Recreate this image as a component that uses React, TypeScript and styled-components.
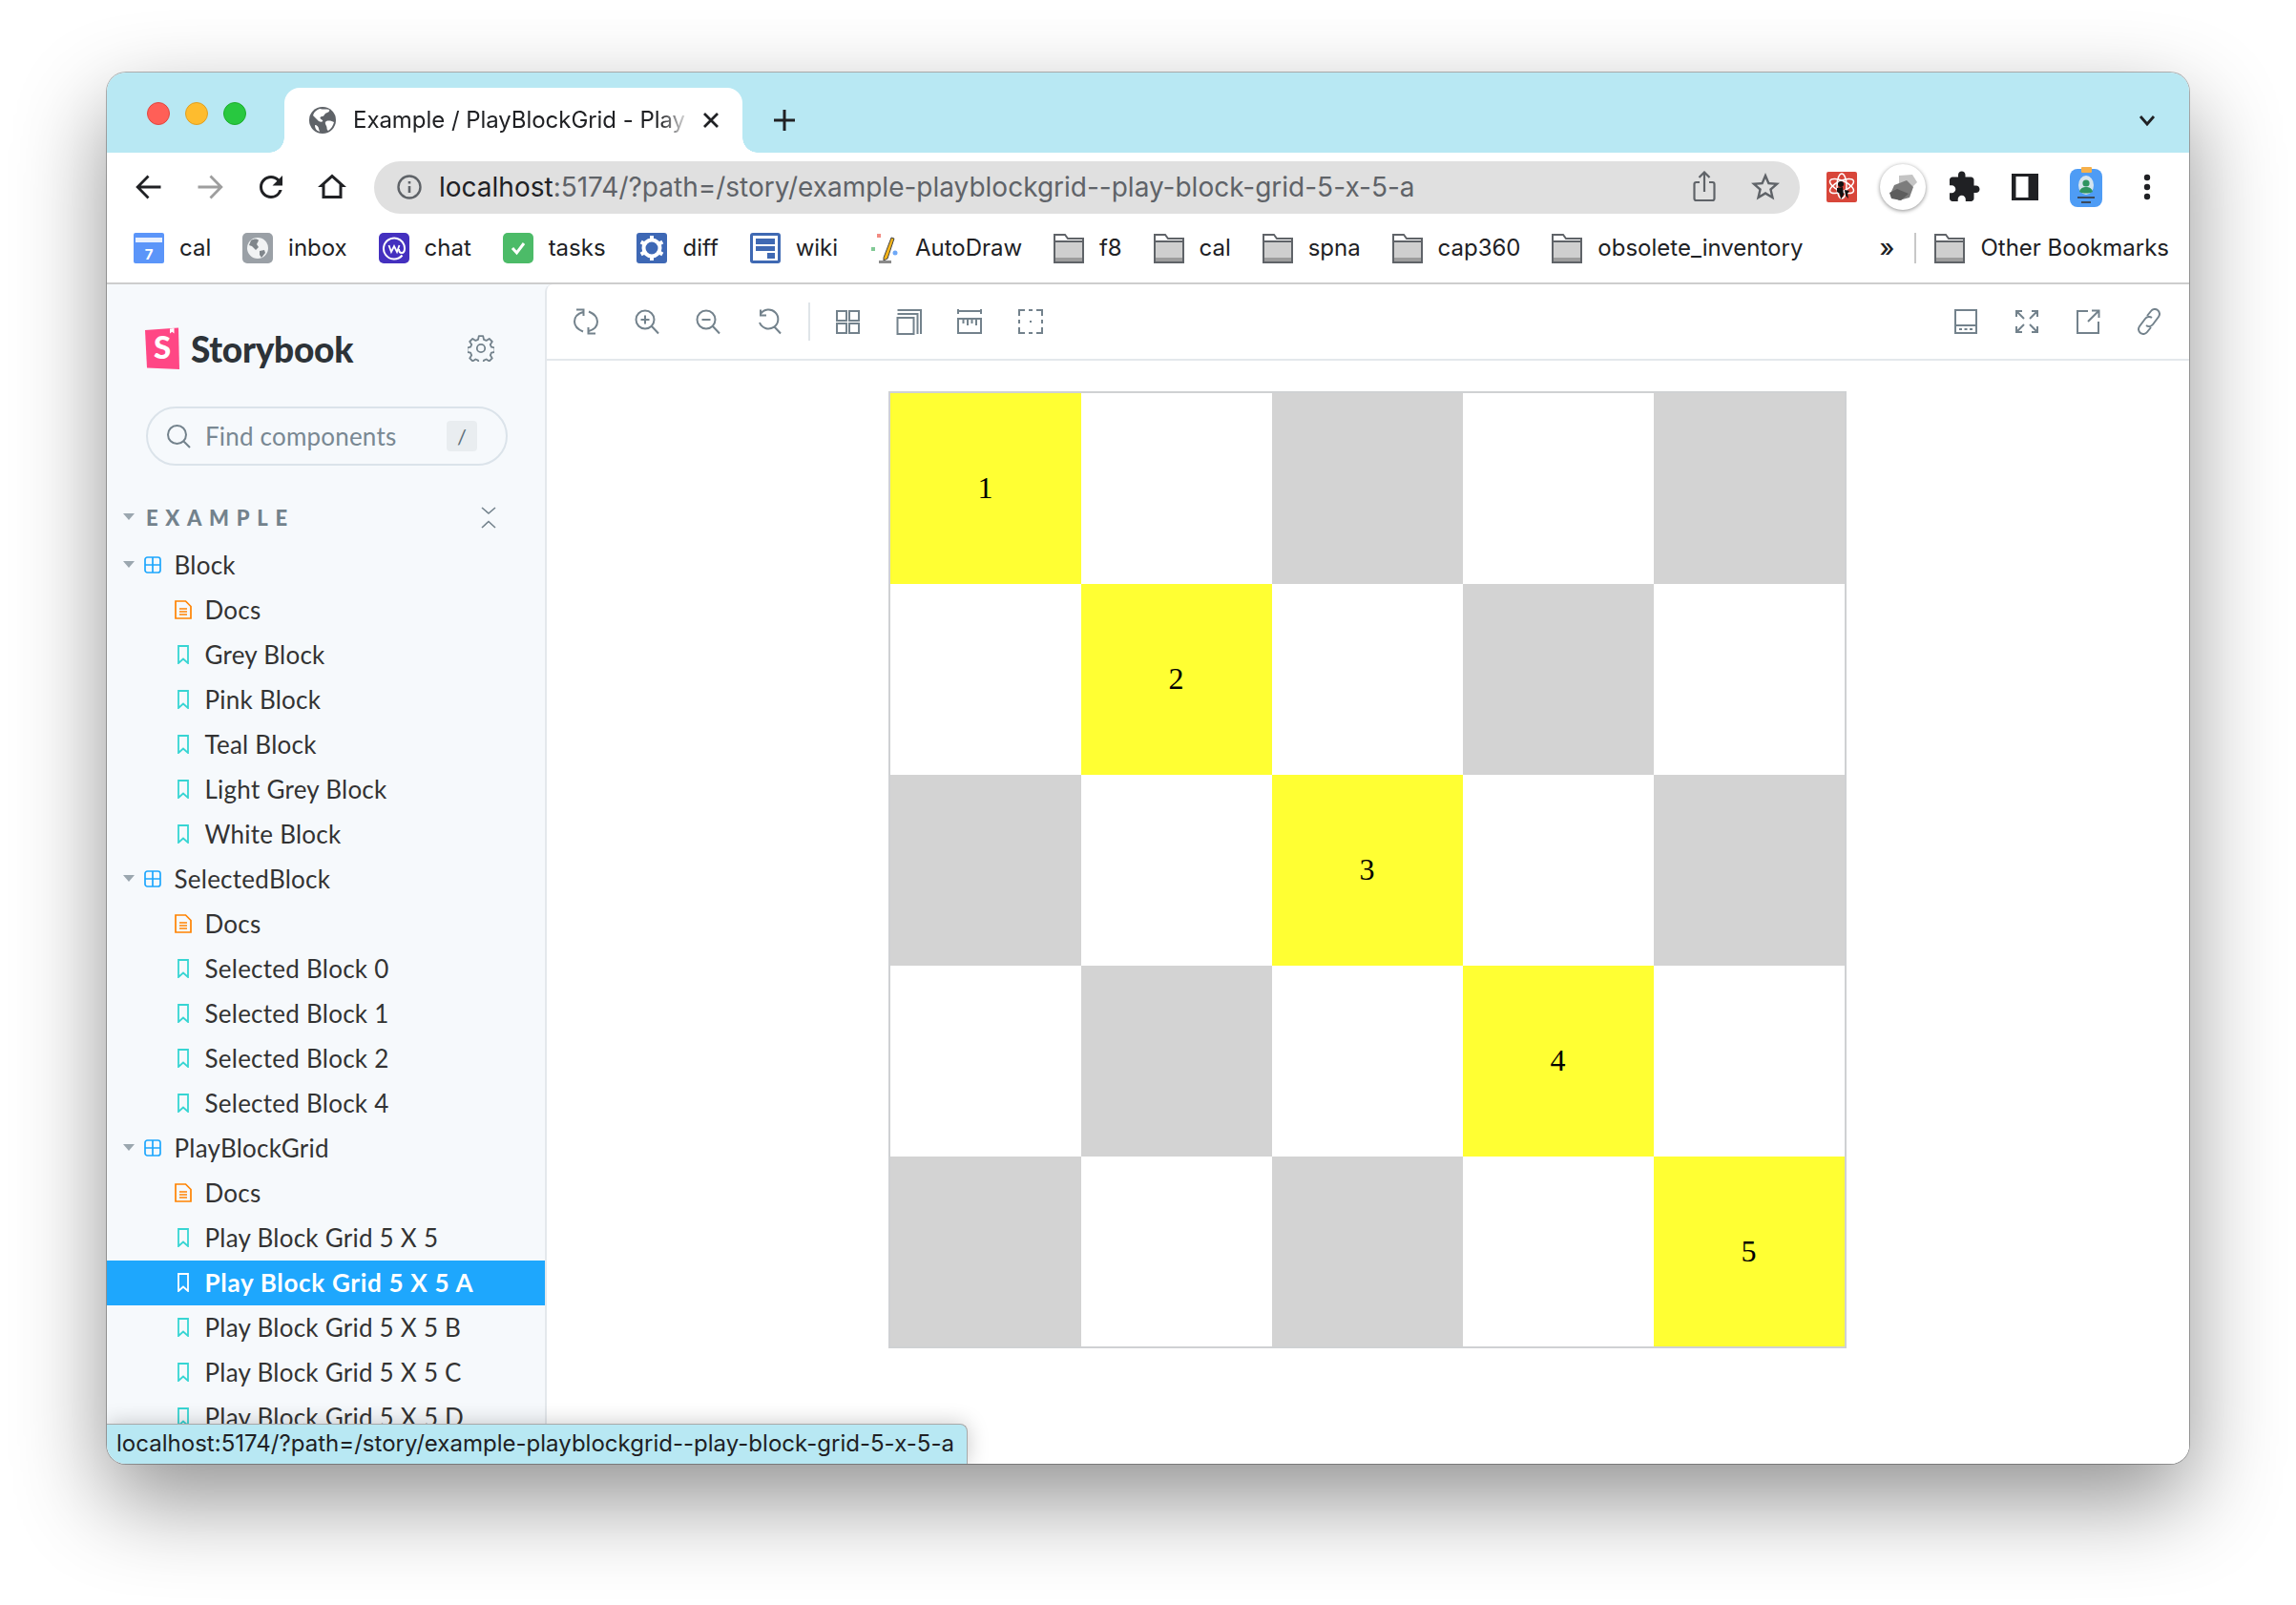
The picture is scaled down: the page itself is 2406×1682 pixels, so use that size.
import React from "react"
import styled, { createGlobalStyle } from "styled-components"

const CHROME_FONT = `Inter, "Noto Sans", sans-serif`
const SB_FONT = `Lato, "Noto Sans", sans-serif`

const GlobalStyle = createGlobalStyle`
  html, body {
    margin: 0;
    padding: 0;
    background: #fff;
  }
  * {
    box-sizing: border-box;
  }
`

const Page = styled.div`
  width: 2406px;
  height: 1682px;
  padding: 76px 0 0 112px;
  overflow: hidden;
`

const Window = styled.div`
  position: relative;
  display: flex;
  flex-direction: column;
  width: 2182px;
  height: 1458px;
  border-radius: 20px;
  overflow: hidden;
  background: #fff;
  box-shadow: 0 38px 94px rgba(0, 0, 0, 0.43), 0 0 0 1px rgba(0, 0, 0, 0.28);
  font-family: ${CHROME_FONT};
  color: #202124;
`

// tab strip
const TabStrip = styled.div`
  display: flex;
  align-items: flex-start;
  flex: none;
  height: 84px;
  padding: 16px 12px 0 42px;
  background: #b8e8f3;
`

const TrafficLights = styled.div`
  display: flex;
  gap: 16px;
  margin: 15px 40px 0 0;
`

const Light = styled.span<{ $fill: string; $edge: string }>`
  width: 24px;
  height: 24px;
  border-radius: 50%;
  background: ${({ $fill }) => $fill};
  border: 1px solid ${({ $edge }) => $edge};
`

const Tab = styled.div`
  position: relative;
  display: flex;
  align-items: center;
  width: 480px;
  height: 68px;
  padding: 0 19px 0 26px;
  background: #fff;
  border-radius: 16px 16px 0 0;

  &::before,
  &::after {
    content: "";
    position: absolute;
    bottom: 0;
    width: 16px;
    height: 16px;
  }
  &::before {
    left: -16px;
    background: radial-gradient(circle at 0 0, transparent 15.5px, #fff 16px);
  }
  &::after {
    right: -16px;
    background: radial-gradient(circle at 100% 0, transparent 15.5px, #fff 16px);
  }
`

const TabTitle = styled.span`
  flex: 1;
  margin: 0 12px 0 18px;
  font-size: 24px;
  line-height: 34px;
  letter-spacing: -0.05px;
  white-space: nowrap;
  mask-image: linear-gradient(to right, #000 92%, rgba(0, 0, 0, 0.15) 100%);
`

const NewTab = styled.div`
  display: flex;
  justify-content: center;
  align-items: center;
  width: 36px;
  height: 68px;
  margin-left: 26px;
`

const StripEnd = styled.div`
  display: flex;
  justify-content: center;
  align-items: center;
  width: 64px;
  height: 68px;
  margin-left: auto;
`

// address toolbar
const Toolbar = styled.div`
  display: flex;
  align-items: center;
  flex: none;
  height: 72px;
  padding: 0 12px;
`

const ToolButton = styled.div`
  display: flex;
  justify-content: center;
  align-items: center;
  flex: none;
  width: 64px;
  height: 56px;
`

const AddressBar = styled.div`
  display: flex;
  align-items: center;
  flex: 1;
  height: 55px;
  margin: 0 12px;
  padding: 0 4px 0 21px;
  border-radius: 28px;
  background: #e0e0e0;
`

const InfoSlot = styled.div`
  display: flex;
  flex: none;
  justify-content: center;
  width: 32px;
`

const Url = styled.div`
  flex: 1;
  margin-left: 15px;
  font-size: 28px;
  line-height: 36px;
  color: #5f6368;
  white-space: nowrap;
`

const UrlHost = styled.span`
  color: #202124;
`

// bookmarks
const BookmarkBar = styled.div`
  display: flex;
  align-items: center;
  flex: none;
  height: 66px;
  padding: 0 21px 8px 28px;
  gap: 32.85px;
  border-bottom: 2px solid #cdcdcd;
`

const Bookmark = styled.div`
  display: flex;
  align-items: center;
  gap: 16px;
  font-size: 24px;
  line-height: 32px;
  white-space: nowrap;
`

const MoreBookmarks = styled.div`
  display: flex;
  align-items: center;
  height: 32px;
  margin-left: auto;
  font-size: 26px;
  font-weight: 500;
  line-height: 32px;
`

const BookmarkDivider = styled.div`
  width: 2px;
  height: 32px;
  margin: 0 -13.85px 0 -11.85px;
  background: #c8c8c8;
`

// storybook shell
const Shell = styled.div`
  display: flex;
  flex: 1;
  min-height: 0;
  font-family: ${SB_FONT};
  background: #f6f9fc;
`

const Sidebar = styled.aside`
  flex: none;
  width: 459px;
  padding-top: 45px;
  overflow: hidden;
`

const Brand = styled.div`
  display: flex;
  align-items: center;
  height: 44px;
  padding: 0 40px;
`

const BrandName = styled.span`
  margin-left: 12px;
  font-size: 37px;
  font-weight: 900;
  letter-spacing: -0.25px;
  color: #2d3338;
`

const BrandGear = styled.div`
  display: flex;
  margin-left: auto;
  margin-right: 13px;
`

const Search = styled.div`
  display: flex;
  align-items: center;
  width: 379px;
  height: 62px;
  margin: 39px 0 0 41px;
  padding: 0 30px 0 18px;
  border: 2px solid #dbe3ea;
  border-radius: 31px;
`

const SearchText = styled.span`
  flex: 1;
  margin-left: 14px;
  font-size: 26px;
  letter-spacing: 0.2px;
  color: #798893;
`

const SlashKey = styled.span`
  display: flex;
  justify-content: center;
  align-items: center;
  width: 32px;
  height: 32px;
  border-radius: 4px;
  background: #e9edf0;
  font-size: 22px;
  color: #5f6f7a;
`

const GroupHeader = styled.div`
  display: flex;
  align-items: center;
  height: 30px;
  margin: 39px 0 12px;
  padding: 0 45px 0 17px;
`

const GroupTitle = styled.span`
  flex: 1;
  margin-left: 12px;
  font-size: 22px;
  font-weight: 900;
  letter-spacing: 7.7px;
  color: #73828c;
`

const Row = styled.div<{ $leaf?: boolean; $selected?: boolean }>`
  display: flex;
  align-items: center;
  height: 47px;
  padding: 0 0 1px ${({ $leaf }) => ($leaf ? "71px" : "17px")};
  font-size: 26px;
  font-weight: ${({ $selected }) => ($selected ? 700 : 400)};
  letter-spacing: ${({ $selected }) => ($selected ? "0.7px" : "0.25px")};
  color: ${({ $selected }) => ($selected ? "#fff" : "#333")};
  background: ${({ $selected }) => ($selected ? "#1ea7fd" : "transparent")};
  white-space: nowrap;
`

const RowIcon = styled.span<{ $wide?: boolean }>`
  display: flex;
  justify-content: center;
  flex: none;
  width: 18px;
  margin: ${({ $wide }) => ($wide ? "0 13.5px 0 10px" : "0 13.5px 0 0")};
`

const Preview = styled.main`
  display: flex;
  flex-direction: column;
  flex: 1;
  min-width: 0;
  background: #fff;
  border-left: 2px solid #e4e8ec;
  border-top-left-radius: 8px;
`

const PreviewBar = styled.div`
  display: flex;
  align-items: center;
  flex: none;
  height: 80px;
  padding: 0 10px 0 9px;
  border-bottom: 2px solid #e4e8ec;
`

const PreviewButton = styled.div`
  display: flex;
  justify-content: center;
  align-items: center;
  width: 64px;
  height: 56px;
`

const PreviewDivider = styled.div`
  width: 2px;
  height: 40px;
  margin: 0 7px 0 9px;
  background: #e0e5e9;
`

const PreviewSpacer = styled.div`
  flex: 1;
`

const BoardStage = styled.div`
  display: flex;
  justify-content: center;
  padding: 32px 2px 0 0;
`

const Board = styled.div`
  display: grid;
  grid-template-columns: repeat(5, 200px);
  grid-auto-rows: 199.9px;
  border: 2px solid #cfd1d3;
`

const cellColors = { Y: "#ffff33", W: "#ffffff", G: "#d3d3d3" }

const Cell = styled.div<{ $kind: "Y" | "W" | "G" }>`
  display: flex;
  justify-content: center;
  align-items: center;
  background: ${({ $kind }) => cellColors[$kind]};
  font-family: "Liberation Serif", serif;
  font-size: 32px;
  color: #000;
`

const StatusBubble = styled.div`
  position: absolute;
  left: 0;
  bottom: 0;
  width: 902px;
  height: 42px;
  padding-left: 10px;
  border-top: 1px solid #a9a9a9;
  border-right: 1px solid #a9a9a9;
  border-top-right-radius: 8px;
  background: #b8e8f3;
  box-shadow: 0 0 22px rgba(0, 0, 0, 0.22);
  font-family: ${CHROME_FONT};
  font-size: 24px;
  letter-spacing: 0.02px;
  line-height: 40px;
  color: #202124;
  white-space: nowrap;
`

// chrome icons
const Svg = styled.svg`
  display: block;
  flex: none;
`

const Material = ({ d, size = 36, fill = "#202124" }: { d: string; size?: number; fill?: string }) => (
  <Svg width={size} height={size} viewBox="0 0 24 24">
    <path d={d} fill={fill} />
  </Svg>
)

const Arrow = ({ flip, color }: { flip?: boolean; color: string }) => (
  <Svg width="30" height="30" viewBox="0 0 30 30" style={flip ? { transform: "scaleX(-1)" } : undefined}>
    <path d="M27.5 15H4M14.5 3.5L3.2 15l11.3 11.5" fill="none" stroke={color} strokeWidth="2.8" />
  </Svg>
)

const GlobeTab = () => (
  <Svg width="28" height="28" viewBox="0 0 28 28">
    <circle cx="14" cy="14" r="14" fill="#5f6368" />
    <path d="M11 2c4 1 7 0 10 1 1 2-2 3-4 4-2 2-1 3-4 3-3 1-1 3 1 4 1 2-2 2-4 1L4 9c1-4 4-6 7-7zM18 15c3-1 6 0 8 1-1 4-3 7-6 9-2-1-1-3-2-5s-2-4 0-5zM6 19c2 0 4 2 4 4l1 3c-3-1-5-3-5-7z" fill="#fff" />
  </Svg>
)

const InfoIcon = () => (
  <Svg width="28" height="28" viewBox="0 0 28 28">
    <circle cx="14" cy="14" r="11.5" fill="none" stroke="#5f6368" strokeWidth="2.4" />
    <path d="M14 13v7M14 8v2.6" stroke="#5f6368" strokeWidth="2.6" />
  </Svg>
)

const ShareIcon = () => (
  <Svg width="28" height="34" viewBox="0 0 28 34">
    <path d="M9 12H5.5a2 2 0 0 0-2 2v15a2 2 0 0 0 2 2h17a2 2 0 0 0 2-2V14a2 2 0 0 0-2-2H19M14 22V2M8.5 7L14 1.5 19.5 7" fill="none" stroke="#5f6368" strokeWidth="2.2" />
  </Svg>
)

const RedExtension = () => (
  <Svg width="32" height="32" viewBox="0 0 32 32">
    <rect width="32" height="32" rx="2" fill="#d8463a" />
    <g fill="none" stroke="#fff" strokeWidth="1.5">
      <ellipse cx="16" cy="15" rx="13.5" ry="5.5" transform="rotate(25 16 15)" />
      <ellipse cx="16" cy="15" rx="13.5" ry="5.5" transform="rotate(-25 16 15)" />
      <ellipse cx="16" cy="15" rx="5" ry="13" />
    </g>
    <circle cx="15" cy="13" r="3" fill="#111" />
    <path d="M11 17l6-1 1 8-3 5-1-6-3-2zM19 19l5 1-2 3 1 5-3-3z" fill="#111" />
  </Svg>
)

const StoneExtension = () => (
  <Svg width="48" height="48" viewBox="0 0 48 48" style={{ borderRadius: "50%", boxShadow: "0 1px 4px rgba(0,0,0,.45)", background: "#fff" }}>
    <path d="M20 12l14-1 5 8-8 8-11-5z" fill="#c4c4c4" />
    <path d="M15 22l13-5 7 7-4 11-11 3-9-7z" fill="#7c7c7c" />
    <path d="M10 30l8-4 12 5-8 7-10-2z" fill="#5d5d5d" />
  </Svg>
)

const PanelIcon = () => (
  <Svg width="28" height="28" viewBox="0 0 28 28">
    <rect width="28" height="28" fill="#202124" />
    <rect x="4.5" y="3" width="13" height="22" fill="#fff" />
  </Svg>
)

const BadgeExtension = () => (
  <Svg width="34" height="42" viewBox="0 0 34 42">
    <rect y="2" width="34" height="40" rx="8" fill="#4e9cf5" />
    <rect x="12" width="11" height="6" rx="1" fill="#f6b04a" />
    <ellipse cx="17" cy="19" rx="8" ry="10" fill="#d5e4ee" />
    <circle cx="17" cy="17" r="3.6" fill="#2f9460" />
    <path d="M10 26c1-4 4-5 7-5s6 1 7 5c-4 2-10 2-14 0z" fill="#2f9460" />
    <rect x="8" y="31" width="18" height="2" fill="#3a4a5c" />
    <rect x="12" y="36" width="10" height="2" fill="#3a4a5c" />
  </Svg>
)

const DotsIcon = () => (
  <Svg width="10" height="30" viewBox="0 0 10 30">
    <circle cx="5" cy="5" r="3.2" fill="#202124" />
    <circle cx="5" cy="15" r="3.2" fill="#202124" />
    <circle cx="5" cy="25" r="3.2" fill="#202124" />
  </Svg>
)

// bookmark favicons
const Fav = ({ children }: { children: React.ReactNode }) => (
  <Svg width="32" height="32" viewBox="0 0 32 32">
    {children}
  </Svg>
)

const CalFav = () => (
  <Fav>
    <rect width="32" height="32" rx="2" fill="#5b95f9" />
    <rect x="2" y="5" width="28" height="5" fill="#e8f0fe" />
    <text x="16" y="28" textAnchor="middle" fontFamily="Inter, sans-serif" fontWeight="700" fontSize="15" fill="#fff">7</text>
  </Fav>
)

const InboxFav = () => (
  <Fav>
    <rect width="32" height="32" rx="5" fill="#9aa0a6" />
    <circle cx="16" cy="16" r="11" fill="#f1f3f4" />
    <path d="M9 8c3-2 7-2 8 0l-2 4 2 3-3 3-4-4-3-1zM18 19l5-1 1 3-4 5-2-3z" fill="#80868b" />
  </Fav>
)

const ChatFav = () => (
  <Fav>
    <rect width="32" height="32" rx="5" fill="#4430bf" />
    <path d="M24.5 23.5A11 11 0 1 1 27 16c0 3-1 5-3 5s-3-2-3-4" fill="none" stroke="#fff" strokeWidth="2" />
    <path d="M10.5 13l2.5 7 3-6 3 6 2.5-7" fill="none" stroke="#fff" strokeWidth="1.8" />
  </Fav>
)

const TasksFav = () => (
  <Fav>
    <rect width="32" height="32" rx="5" fill="#4cbb68" />
    <path d="M10 16l4.5 5L22 11" fill="none" stroke="#fff" strokeWidth="3" />
  </Fav>
)

const DiffFav = () => (
  <Fav>
    <rect width="32" height="32" rx="3" fill="#3e68b5" />
    <circle cx="16" cy="16" r="8.5" fill="none" stroke="#fff" strokeWidth="4" />
    <path d="M16 3v5M16 24v5M4.7 9.5l4.3 2.5M23 20l4.3 2.5M4.7 22.5L9 20M23 12l4.3-2.5" stroke="#fff" strokeWidth="4" />
    <circle cx="16" cy="16" r="3" fill="#3e68b5" />
  </Fav>
)

const WikiFav = () => (
  <Fav>
    <rect width="32" height="32" rx="3" fill="#3f69b3" />
    <rect x="3" y="3" width="26" height="26" fill="#fff" />
    <rect x="6" y="6" width="20" height="6" fill="#3f69b3" />
    <rect x="6" y="14" width="20" height="5" fill="#3f69b3" />
    <rect x="18" y="21" width="8" height="6" fill="#3f69b3" />
  </Fav>
)

const DrawFav = () => (
  <Fav>
    <path d="M15 26L23 5l3 1-7 21-4 2z" fill="#f4b41a" stroke="#444" strokeWidth="1" />
    <rect x="10" y="29" width="13" height="3" fill="#8a8a8a" />
    <rect x="8" y="1" width="4" height="4" fill="#f28b82" />
    <rect x="2" y="15" width="4" height="4" fill="#81c995" />
    <circle cx="27" cy="21" r="2.5" fill="#6ea8f7" />
  </Fav>
)

const FolderFav = () => (
  <Fav>
    <path d="M1 2h11l3 4h16v25H1z" fill="#fff" stroke="#5f6368" strokeWidth="2" />
    <rect x="2" y="9" width="28" height="21" fill="#cfcfcf" />
    <rect x="2" y="8" width="28" height="2" fill="#5f6368" />
    <rect x="2" y="26" width="28" height="4" fill="#9d9d9d" />
  </Fav>
)

// storybook icons
const LogoMark = () => (
  <Svg width="36" height="44" viewBox="0 0 36 44">
    <path d="M0 3L35 0.5l1 43.5L2 42.5z" fill="#ff4785" />
    <path d="M26 1.500l4.500-.4V6.500l-2.200-1.800L26 6.500z" fill="#fff" />
    <text x="18" y="33" textAnchor="middle" fontFamily="Lato, sans-serif" fontWeight="900" fontSize="33" fill="#fff">S</text>
  </Svg>
)

const SB_STROKE = "#73828c"

const Line = ({ d, size = 28, color = SB_STROKE, width = 2 }: { d: string; size?: number; color?: string; width?: number }) => (
  <Svg width={size} height={size} viewBox="0 0 28 28">
    <path d={d} fill="none" stroke={color} strokeWidth={width} />
  </Svg>
)

const GearIcon = () => (
  <Svg width="28" height="28" viewBox="0 0 28 28">
    <circle cx="14" cy="14" r="4.2" fill="none" stroke={SB_STROKE} strokeWidth="1.8" />
    <path d="M11.8 1.2h4.4l.8 3.6 2.6 1.1 3.1-2 3.1 3.1-2 3.1 1.1 2.6 3.6.8v4.4l-3.6.8-1.1 2.6 2 3.1-3.1 3.1-3.1-2-2.6 1.1-.8 3.6h-4.4l-.8-3.6-2.6-1.1-3.1 2-3.1-3.1 2-3.1-1.1-2.6-3.6-.8v-4.4l3.6-.8 1.1-2.6-2-3.1 3.100-3.1 3.1 2 2.6-1.1z" fill="none" stroke={SB_STROKE} strokeWidth="1.8" strokeLinejoin="round" />
  </Svg>
)

const Caret = () => (
  <Svg width="12" height="8" viewBox="0 0 12 8">
    <path d="M0 0h12L6 7z" fill="#9ba7af" />
  </Svg>
)

const ComponentIcon = ({ color = "#1ea7fd" }: { color?: string }) => (
  <Svg width="18" height="18" viewBox="0 0 18 18">
    <rect x="1" y="1" width="16" height="16" rx="2.5" fill="none" stroke={color} strokeWidth="1.7" />
    <path d="M9 1v16M1 9h16" stroke={color} strokeWidth="1.7" />
  </Svg>
)

const DocIcon = () => (
  <Svg width="18" height="20" viewBox="0 0 18 20">
    <path d="M1 1h10.5L17 6.5V19H1z" fill="none" stroke="#ff8300" strokeWidth="1.7" />
    <path d="M5 9h8M5 12h8M5 15h8" stroke="#ff8300" strokeWidth="1.4" />
  </Svg>
)

const StoryIcon = ({ color = "#37d5d3" }: { color?: string }) => (
  <Svg width="12" height="20" viewBox="0 0 12 20">
    <path d="M1 1h10v18l-5-4.5L1 19z" fill="none" stroke={color} strokeWidth="1.8" />
  </Svg>
)

const previewLeft = [
  "M11 4C6 5.500 2 9 2 14s3 8 9 10.500M4 1.500h7.500V8M17 24c5-1.500 9-5 9-10s-3-8-9-10.500M24 26.500h-7.500V20",
  "M12 2.500a9.500 9.500 0 1 1 0 19 9.500 9.500 0 0 1 0-19zM19 19l7 7.500M12 7.500v9M7.500 12h9",
  "M12 2.500a9.500 9.500 0 1 1 0 19 9.500 9.500 0 0 1 0-19zM19 19l7 7.500M7.500 12h9",
  "M5 6a10 10 0 1 1-1 9M5 1.500V7.500h6M19 19l7 7.500",
]

const previewRight = [
  "M3 3h10v10H3zM16 3h10v10H16zM3 16h10v10H3zM16 16h10v10H16z",
  "M2.500 10h17v17h-17zM2.500 6H23.500V27M2.500 2H27V27",
  "M2 3h24M2 1v5M26 1v5M2 11h24v15H2zM7.500 11v5M12 11v7M16.500 11v5M21 11v7",
  "M2 8V2h6M20 2h6v6M26 20v6h-6M8 26H2v-6M12 2h4M12 26h4M2 12v4M26 12v4M14 13v2",
]

const previewEnd = [
  "M3 2h22v24H3zM3 18h22M7 22h3M12.500 22h3M18 22h3",
  "M3 3l8 8M3 9V3h6M25 3l-8 8M25 9V3h-6M3 25l8-8M3 19v6h6M25 25l-8-8M25 19v6h-6",
  "M14 3H3v23h22V14M14 14L25 3M18 2.500h7.500V10",
  "M12 8l4-5a5 5 0 0 1 8 6l-6 8a5 5 0 0 1-7 1M16 20l-4 5a5 5 0 0 1-8-6l6-8a5 5 0 0 1 7-1",
]

const BOARD = ["YWGWG", "WYWGW", "GWYWG", "WGWYW", "GWGWY"]

type TreeItem = { label: string; kind: "component" | "doc" | "story"; selected?: boolean }

const TREE: TreeItem[] = [
  { label: "Block", kind: "component" },
  { label: "Docs", kind: "doc" },
  { label: "Grey Block", kind: "story" },
  { label: "Pink Block", kind: "story" },
  { label: "Teal Block", kind: "story" },
  { label: "Light Grey Block", kind: "story" },
  { label: "White Block", kind: "story" },
  { label: "SelectedBlock", kind: "component" },
  { label: "Docs", kind: "doc" },
  { label: "Selected Block 0", kind: "story" },
  { label: "Selected Block 1", kind: "story" },
  { label: "Selected Block 2", kind: "story" },
  { label: "Selected Block 4", kind: "story" },
  { label: "PlayBlockGrid", kind: "component" },
  { label: "Docs", kind: "doc" },
  { label: "Play Block Grid 5 X 5", kind: "story" },
  { label: "Play Block Grid 5 X 5 A", kind: "story", selected: true },
  { label: "Play Block Grid 5 X 5 B", kind: "story" },
  { label: "Play Block Grid 5 X 5 C", kind: "story" },
  { label: "Play Block Grid 5 X 5 D", kind: "story" },
]

const BOOKMARKS: { label: string; icon: React.ReactNode }[] = [
  { label: "cal", icon: <CalFav /> },
  { label: "inbox", icon: <InboxFav /> },
  { label: "chat", icon: <ChatFav /> },
  { label: "tasks", icon: <TasksFav /> },
  { label: "diff", icon: <DiffFav /> },
  { label: "wiki", icon: <WikiFav /> },
  { label: "AutoDraw", icon: <DrawFav /> },
  { label: "f8", icon: <FolderFav /> },
  { label: "cal", icon: <FolderFav /> },
  { label: "spna", icon: <FolderFav /> },
  { label: "cap360", icon: <FolderFav /> },
  { label: "obsolete_inventory", icon: <FolderFav /> },
]

const STATUS_URL = "localhost:5174/?path=/story/example-playblockgrid--play-block-grid-5-x-5-a"

const TreeRow = ({ item }: { item: TreeItem }) => {
  if (item.kind === "component") {
    return (
      <Row>
        <Caret />
        <RowIcon $wide>
          <ComponentIcon />
        </RowIcon>
        {item.label}
      </Row>
    )
  }
  return (
    <Row $leaf $selected={item.selected}>
      <RowIcon>
        {item.kind === "doc" ? <DocIcon /> : <StoryIcon color={item.selected ? "#fff" : undefined} />}
      </RowIcon>
      {item.label}
    </Row>
  )
}

export default function App() {
  return (
    <Page>
      <GlobalStyle />
      <Window>
        <TabStrip>
          <TrafficLights>
            <Light $fill="#ff5f57" $edge="#e2463f" />
            <Light $fill="#febc2e" $edge="#dfa023" />
            <Light $fill="#28c840" $edge="#1dad2c" />
          </TrafficLights>
          <Tab>
            <GlobeTab />
            <TabTitle>Example / PlayBlockGrid - Play</TabTitle>
            <Line d="M7 7l14 14M21 7L7 21" color="#202124" width={2.8} />
          </Tab>
          <NewTab>
            <Line d="M14 3v22M3 14h22" color="#202124" width={3} />
          </NewTab>
          <StripEnd>
            <Line d="M7 10l7 8 7-8" color="#202124" width={2.8} />
          </StripEnd>
        </TabStrip>

        <Toolbar>
          <ToolButton><Arrow color="#202124" /></ToolButton>
          <ToolButton><Arrow flip color="#9e9e9e" /></ToolButton>
          <ToolButton>
            <Material d="M17.65 6.35A7.958 7.958 0 0 0 12 4c-4.42 0-7.99 3.58-7.99 8s3.57 8 7.99 8c3.73 0 6.84-2.55 7.73-6h-2.08A5.99 5.99 0 0 1 12 18c-3.31 0-6-2.69-6-6s2.69-6 6-6c1.66 0 3.14.69 4.22 1.78L13 11h7V4l-2.35 2.35z" />
          </ToolButton>
          <ToolButton>
            <Material d="M12 5.69l5 4.5V18H7v-7.810l5-4.500M12 3L2 12h3v8h14v-8h3L12 3z" />
          </ToolButton>
          <AddressBar>
            <InfoSlot><InfoIcon /></InfoSlot>
            <Url><UrlHost>localhost</UrlHost>:5174/?path=/story/example-playblockgrid--play-block-grid-5-x-5-a</Url>
            <ToolButton><ShareIcon /></ToolButton>
            <ToolButton>
              <Material fill="#5f6368" d="M22 9.240l-7.190-.620L12 2 9.190 8.630 2 9.240l5.460 4.730L5.820 21 12 17.270 18.180 21l-1.630-7.030L22 9.240zM12 15.400l-3.760 2.270 1-4.280-3.320-2.880 4.380-.380L12 6.100l1.710 4.040 4.380.380-3.320 2.880 1 4.280L12 15.400z" />
            </ToolButton>
          </AddressBar>
          <ToolButton><RedExtension /></ToolButton>
          <ToolButton><StoneExtension /></ToolButton>
          <ToolButton>
            <Material d="M20.500 11H19V7c0-1.100-.9-2-2-2h-4V3.500C13 2.120 11.880 1 10.500 1S8 2.120 8 3.500V5H4c-1.100 0-1.990.9-1.990 2v3.800H3.500c1.490 0 2.700 1.210 2.700 2.700s-1.210 2.700-2.700 2.700H2V20c0 1.100.9 2 2 2h3.800v-1.500c0-1.490 1.210-2.700 2.700-2.700 1.490 0 2.700 1.210 2.700 2.700V22H17c1.100 0 2-.9 2-2v-4h1.500c1.380 0 2.500-1.120 2.500-2.500S21.880 11 20.500 11z" />
          </ToolButton>
          <ToolButton><PanelIcon /></ToolButton>
          <ToolButton><BadgeExtension /></ToolButton>
          <ToolButton><DotsIcon /></ToolButton>
        </Toolbar>

        <BookmarkBar>
          {BOOKMARKS.map((bookmark, i) => (
            <Bookmark key={i}>
              {bookmark.icon}
              {bookmark.label}
            </Bookmark>
          ))}
          <MoreBookmarks>»</MoreBookmarks>
          <BookmarkDivider />
          <Bookmark>
            <FolderFav />
            Other Bookmarks
          </Bookmark>
        </BookmarkBar>

        <Shell>
          <Sidebar>
            <Brand>
              <LogoMark />
              <BrandName>Storybook</BrandName>
              <BrandGear><GearIcon /></BrandGear>
            </Brand>
            <Search>
              <Line d="M12.500 3a9.500 9.500 0 1 1 0 19 9.500 9.500 0 0 1 0-19zM19.500 19.500L26 26" />
              <SearchText>Find components</SearchText>
              <SlashKey>/</SlashKey>
            </Search>
            <GroupHeader>
              <Caret />
              <GroupTitle>EXAMPLE</GroupTitle>
              <Line d="M7 4l7 6 7-6M7 25l7-6.500 7 6.500" width={1.6} />
            </GroupHeader>
            {TREE.map((item, i) => (
              <TreeRow key={i} item={item} />
            ))}
          </Sidebar>

          <Preview>
            <PreviewBar>
              {previewLeft.map((d) => (
                <PreviewButton key={d}><Line d={d} /></PreviewButton>
              ))}
              <PreviewDivider />
              {previewRight.map((d) => (
                <PreviewButton key={d}><Line d={d} /></PreviewButton>
              ))}
              <PreviewSpacer />
              {previewEnd.map((d) => (
                <PreviewButton key={d}><Line d={d} /></PreviewButton>
              ))}
            </PreviewBar>
            <BoardStage>
              <Board>
                {BOARD.flatMap((line, r) =>
                  line.split("").map((kind, c) => (
                    <Cell key={`${r}-${c}`} $kind={kind as "Y" | "W" | "G"}>
                      {kind === "Y" ? r + 1 : ""}
                    </Cell>
                  )),
                )}
              </Board>
            </BoardStage>
          </Preview>
        </Shell>

        <StatusBubble>{STATUS_URL}</StatusBubble>
      </Window>
    </Page>
  )
}
